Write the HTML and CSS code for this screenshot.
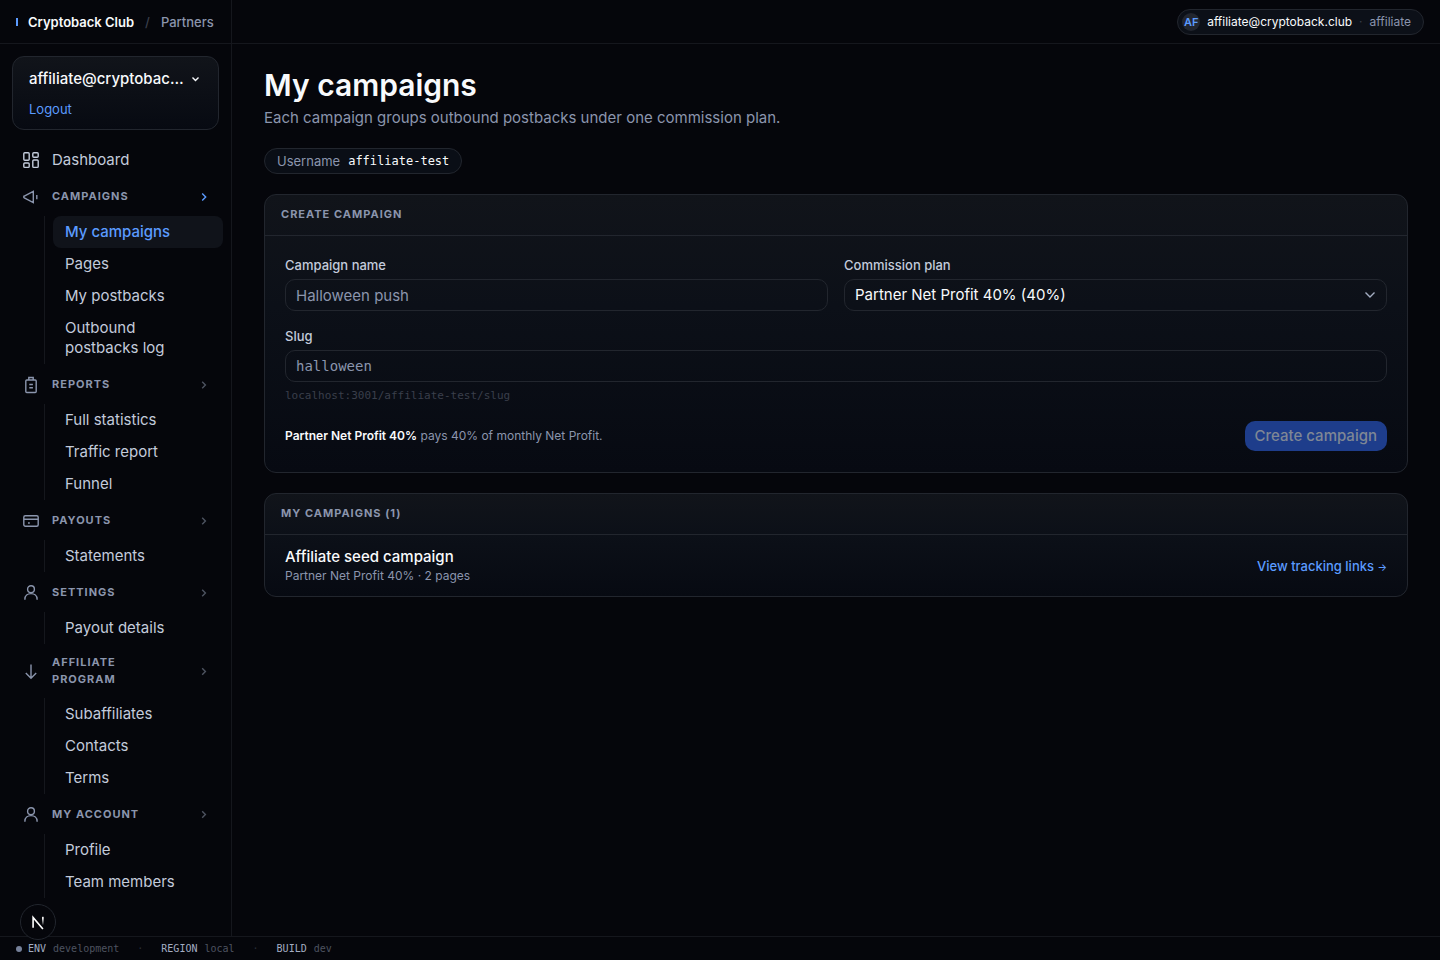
FILE: index.html
```html
<!DOCTYPE html>
<html lang="en">
<head>
    <meta charset="UTF-8">
    <meta name="viewport" content="width=device-width, initial-scale=1.0">
    <title>My campaigns - Cryptoback Club</title>
    <link rel="stylesheet" href="styles.css">
</head>
<body>
    <div class="app">
        <header class="topbar">
            <div class="brand">
                <span class="brand-mark"></span>
                <span class="brand-name">Cryptoback Club</span>
                <span class="brand-sep">/</span>
                <span class="brand-section">Partners</span>
            </div>
            <div class="topbar-right">
                <div class="user-pill">
                    <span class="avatar">AF</span>
                    <span>affiliate@cryptoback.club</span>
                    <span class="dim">·</span>
                    <span class="muted">affiliate</span>
                </div>
            </div>
        </header>

        <aside class="sidebar">
            <div class="account">
                <button type="button" class="account-btn">
                    <span class="account-name">affiliate@cryptoback.club</span>
                    <svg class="chev" viewBox="0 0 14 14"><path d="M4.5 5.5l3 3 3-3"/></svg>
                </button>
                <a href="#" class="logout">Logout</a>
            </div>

            <nav class="nav">
                <a href="#" class="nav-row nav-top">
                    <svg class="icon" viewBox="0 0 20 20"><rect x="2.8" y="2.8" width="5.4" height="7.4" rx="1"/><rect x="11.8" y="2.8" width="5.4" height="4.4" rx="1"/><rect x="2.8" y="13" width="5.4" height="4.4" rx="1"/><rect x="11.8" y="10" width="5.4" height="7.4" rx="1"/></svg>
                    <span class="nav-label">Dashboard</span>
                </a>

                <div class="group">
                    <button type="button" class="nav-row nav-head open">
                        <svg class="icon" viewBox="0 0 20 20"><path d="M12.3 5.3L3.3 10a1 1 0 0 0 0 1.8l9 4.7zM15.8 9v4.2"/></svg>
                        <span class="nav-label">Campaigns</span>
                        <svg class="chev" viewBox="0 0 14 14"><path d="M5.2 4.5L8.7 8l-3.5 3.5"/></svg>
                    </button>
                    <div class="sub">
                        <a href="#" class="active">My campaigns</a>
                        <a href="#">Pages</a>
                        <a href="#">My postbacks</a>
                        <a href="#">Outbound postbacks log</a>
                    </div>
                </div>

                <div class="group">
                    <button type="button" class="nav-row nav-head">
                        <svg class="icon" viewBox="0 0 20 20"><rect x="4.8" y="6" width="10.4" height="12.5" rx="1"/><path d="M7.8 6V3.5h4.4V6M8.3 10.5h3.6M8.3 13.7h3.6"/></svg>
                        <span class="nav-label">Reports</span>
                        <svg class="chev" viewBox="0 0 14 14"><path d="M5.2 4.8L8.4 8l-3.2 3.2"/></svg>
                    </button>
                    <div class="sub">
                        <a href="#">Full statistics</a>
                        <a href="#">Traffic report</a>
                        <a href="#">Funnel</a>
                    </div>
                </div>

                <div class="group">
                    <button type="button" class="nav-row nav-head">
                        <svg class="icon" viewBox="0 0 20 20"><rect x="2.8" y="5.8" width="14.4" height="10.4" rx="1.5"/><path d="M2.8 9.3h14.4M7 13h1.8"/></svg>
                        <span class="nav-label">Payouts</span>
                        <svg class="chev" viewBox="0 0 14 14"><path d="M5.2 4.8L8.4 8l-3.2 3.2"/></svg>
                    </button>
                    <div class="sub">
                        <a href="#">Statements</a>
                    </div>
                </div>

                <div class="group">
                    <button type="button" class="nav-row nav-head">
                        <svg class="icon" viewBox="0 0 20 20"><circle cx="10" cy="7.2" r="3.4"/><path d="M3.9 17.8v-.6c0-3.4 2.7-5.6 6.1-5.6s6.1 2.2 6.1 5.6v.6"/></svg>
                        <span class="nav-label">Settings</span>
                        <svg class="chev" viewBox="0 0 14 14"><path d="M5.2 4.8L8.4 8l-3.2 3.2"/></svg>
                    </button>
                    <div class="sub">
                        <a href="#">Payout details</a>
                    </div>
                </div>

                <div class="group">
                    <button type="button" class="nav-row nav-head">
                        <svg class="icon" viewBox="0 0 20 20"><path d="M10 3.5v13.5M4.8 12l5.2 5.2 5.2-5.2"/></svg>
                        <span class="nav-label">Affiliate program</span>
                        <svg class="chev" viewBox="0 0 14 14"><path d="M5.2 4.3l3.2 3.2-3.2 3.2"/></svg>
                    </button>
                    <div class="sub">
                        <a href="#">Subaffiliates</a>
                        <a href="#">Contacts</a>
                        <a href="#">Terms</a>
                    </div>
                </div>

                <div class="group">
                    <button type="button" class="nav-row nav-head">
                        <svg class="icon" viewBox="0 0 20 20"><circle cx="10" cy="7.2" r="3.4"/><path d="M3.9 17.8v-.6c0-3.4 2.7-5.6 6.1-5.6s6.1 2.2 6.1 5.6v.6"/></svg>
                        <span class="nav-label">My account</span>
                        <svg class="chev" viewBox="0 0 14 14"><path d="M5.2 4.3l3.2 3.2-3.2 3.2"/></svg>
                    </button>
                    <div class="sub">
                        <a href="#">Profile</a>
                        <a href="#">Team members</a>
                    </div>
                </div>
            </nav>
        </aside>

        <main class="main">
            <h1>My campaigns</h1>
            <p class="lead">Each campaign groups outbound postbacks under one commission plan.</p>

            <div class="username">
                <span class="muted">Username</span>
                <span class="mono username-value">affiliate-test</span>
            </div>

            <section class="card">
                <h2>Create campaign</h2>
                <form class="form">
                    <div class="form-row">
                        <div class="field">
                            <label for="name">Campaign name</label>
                            <input type="text" id="name" placeholder="Halloween push">
                        </div>
                        <div class="field">
                            <label for="plan">Commission plan</label>
                            <div class="select">
                                <select id="plan">
                                    <option>Partner Net Profit 40% (40%)</option>
                                </select>
                                <svg viewBox="0 0 16 16"><path d="M3.5 5.5L8 10l4.5-4.5"/></svg>
                            </div>
                        </div>
                    </div>
                    <div class="field">
                        <label for="slug">Slug</label>
                        <input type="text" id="slug" class="mono" placeholder="halloween">
                        <p class="hint mono">localhost:3001/affiliate-test/slug</p>
                    </div>
                    <div class="form-foot">
                        <p><strong>Partner Net Profit 40%</strong> pays 40% of monthly Net Profit.</p>
                        <button type="submit" class="btn" disabled>Create campaign</button>
                    </div>
                </form>
            </section>

            <section class="card">
                <h2>My campaigns (1)</h2>
                <div class="campaign">
                    <div>
                        <h3>Affiliate seed campaign</h3>
                        <p>Partner Net Profit 40% · 2 pages</p>
                    </div>
                    <a href="#">View tracking links <span class="arrow">→</span></a>
                </div>
            </section>
        </main>

        <footer class="status mono">
            <span class="dot"></span>
            <span class="status-item"><b>ENV</b>development</span>
            <span class="status-sep">·</span>
            <span class="status-item"><b>REGION</b>local</span>
            <span class="status-sep">·</span>
            <span class="status-item"><b>BUILD</b>dev</span>
        </footer>
    </div>

    <button type="button" class="devtools" aria-label="Dev tools">
        <svg viewBox="0 0 36 36">
            <defs>
                <linearGradient id="fade" x1="0" y1="0" x2="0" y2="1">
                    <stop offset="0.2" stop-color="#fff"/>
                    <stop offset="1" stop-color="#fff" stop-opacity="0.1"/>
                </linearGradient>
            </defs>
            <path d="M12.8 24V13.2L23.2 25.4" stroke="#fff"/>
            <rect x="22.3" y="12.5" width="1.7" height="8.5" fill="url(#fade)"/>
        </svg>
    </button>
</body>
</html>
```
FILE: styles.css
```css
* {
    box-sizing: border-box;
}
body {
    margin: 0;
    background-color: #05060b;
    color: #f8fafc;
    font-family: Inter, "Liberation Sans", sans-serif;
    font-size: 15px;
    line-height: 20px;
}
h1, h2, h3, p {
    margin: 0;
}
a {
    color: #5b9bff;
    text-decoration: none;
}
button, input, select {
    font: inherit;
    color: inherit;
}
button {
    background: none;
    border: none;
    padding: 0;
    text-align: left;
    cursor: pointer;
}
svg {
    fill: none;
    stroke: currentColor;
    stroke-width: 1.4;
    flex-shrink: 0;
}
.mono {
    font-family: "DejaVu Sans Mono", "Liberation Mono", monospace;
}
.muted {
    color: #8b95ad;
}
.dim {
    color: #3a3f4b;
}
.app {
    display: grid;
    grid-template-columns: 232px 1fr;
    grid-template-rows: 44px 1fr 24px;
    min-height: 100vh;
}

/* Top bar */
.topbar {
    grid-column: 1 / -1;
    display: flex;
    border-bottom: 1px solid #15171d;
}
.brand {
    display: flex;
    align-items: center;
    width: 232px;
    padding-left: 16px;
    border-right: 1px solid #15171d;
    font-size: 13px;
    font-weight: 500;
    white-space: nowrap;
}
.brand-mark {
    width: 2px;
    height: 8px;
    margin-right: 10px;
    background-color: #5b9bff;
}
.brand-name {
    font-weight: 600;
}
.brand-sep {
    margin: 0 11px;
    color: #3a3f4b;
}
.brand-section {
    color: #8b95ad;
}
.topbar-right {
    flex: 1;
    display: flex;
    align-items: center;
    justify-content: flex-end;
    padding-right: 16px;
}
.user-pill {
    display: flex;
    align-items: center;
    gap: 7px;
    height: 26px;
    padding: 0 12px 0 4px;
    border: 1px solid #22262e;
    border-radius: 13px;
    background-color: #0c1018;
    font-size: 12px;
}
.avatar {
    width: 18px;
    height: 18px;
    border-radius: 50%;
    background-color: #22262f;
    color: #5b9bff;
    font-size: 11px;
    font-weight: 600;
    line-height: 18px;
    text-align: center;
}

/* Sidebar */
.sidebar {
    border-right: 1px solid #15171d;
}
.account {
    margin: 12px 12px 0;
    height: 74px;
    padding: 12px 16px;
    border: 1px solid #22262e;
    border-radius: 12px;
    background-image: linear-gradient(#11141a, #070a12);
}
.account-btn {
    display: flex;
    align-items: center;
    gap: 2px;
    width: 100%;
    font-weight: 500;
}
.account-name {
    flex: 1;
    min-width: 0;
    overflow: hidden;
    text-overflow: ellipsis;
    white-space: nowrap;
}
.chev {
    width: 14px;
    height: 14px;
}
.logout {
    display: block;
    margin-top: 10px;
    font-size: 13px;
}
.nav {
    padding: 12px 8px;
}
.nav-row {
    display: flex;
    align-items: center;
    gap: 10px;
    width: 100%;
    min-height: 36px;
    padding: 8px 12px;
}
.nav-top {
    color: #c3cbdb;
}
.nav-head {
    color: #8b95ad;
    font-size: 11px;
    font-weight: 700;
    line-height: 17px;
    letter-spacing: 1px;
    text-transform: uppercase;
}
.nav-label {
    flex: 1;
}
.nav-head .nav-label {
    padding-right: 40px;
}
.nav-head .chev {
    color: #4d5360;
}
.nav-head.open .chev {
    color: #5b9bff;
}
.icon {
    width: 22px;
    height: 20px;
}
.group + .group {
    margin-top: 2px;
}
.sub {
    margin: 2px 0 0 36px;
    padding-left: 8px;
    border-left: 1px solid #15171d;
}
.sub a {
    display: block;
    padding: 6px 12px;
    border-radius: 8px;
    color: #c3cbdb;
}
.sub a.active {
    background-color: #10131a;
    color: #5b9bff;
    font-weight: 500;
}

/* Main */
.main {
    padding: 24px 32px;
}
h1 {
    font-size: 30px;
    font-weight: 600;
    line-height: 34px;
}
.lead {
    margin-top: 6px;
    color: #8b95ad;
}
.username {
    display: inline-flex;
    align-items: center;
    gap: 8px;
    height: 26px;
    margin-top: 20px;
    padding: 0 12px;
    border: 1px solid #22262e;
    border-radius: 13px;
    background-color: #0a0e16;
    font-size: 13px;
}
.username-value {
    font-size: 12px;
}
.card {
    margin-top: 20px;
    border: 1px solid #22262e;
    border-radius: 12px;
    background-image: linear-gradient(#11141a, #0c1018 40%, #070a12);
}
h2 {
    padding: 9px 16px 11px;
    border-bottom: 1px solid #22262e;
    color: #8b95ad;
    font-size: 11px;
    font-weight: 700;
    line-height: 20px;
    letter-spacing: 1px;
    text-transform: uppercase;
}
.form {
    display: flex;
    flex-direction: column;
    gap: 16px;
    padding: 20px 20px 21px;
}
.form-row {
    display: grid;
    grid-template-columns: 1fr 1fr;
    gap: 16px;
}
.field {
    display: flex;
    flex-direction: column;
    gap: 5px;
}
label {
    color: #c3cbdb;
    font-size: 13px;
    font-weight: 500;
    line-height: 18px;
}
input, select {
    width: 100%;
    height: 32px;
    padding: 0 10px;
    border: 1px solid #22262e;
    border-radius: 10px;
    background-color: transparent;
    appearance: none;
}
input.mono {
    font-family: "DejaVu Sans Mono", "Liberation Mono", monospace;
    font-size: 14px;
}
input::placeholder {
    color: #8b95ad;
    opacity: 1;
}
select option {
    background-color: #0c1018;
}
.select {
    position: relative;
}
.select svg {
    position: absolute;
    top: 8px;
    right: 9px;
    width: 16px;
    height: 16px;
    color: #a3adc2;
    pointer-events: none;
}
.hint {
    color: #3a3f4b;
    font-size: 11px;
    line-height: 18px;
}
.form-foot {
    display: flex;
    align-items: center;
    justify-content: space-between;
    color: #8b95ad;
    font-size: 12px;
}
.form-foot strong {
    color: #f8fafc;
    font-weight: 600;
}
.btn {
    height: 30px;
    padding: 0 10px;
    border-radius: 10px;
    background-color: #1e3d8b;
    color: #7f8795;
    font-size: 15px;
    font-weight: 500;
}
.campaign {
    display: flex;
    align-items: center;
    justify-content: space-between;
    padding: 12px 20px 11px;
}
h3 {
    font-size: 15px;
    font-weight: 500;
}
.campaign p {
    color: #8b95ad;
    font-size: 12px;
    line-height: 18px;
}
.campaign a {
    font-size: 13px;
    font-weight: 500;
}
.arrow {
    font-size: 10px;
}

/* Status bar */
.status {
    grid-column: 1 / -1;
    display: flex;
    align-items: center;
    padding: 0 16px;
    border-top: 1px solid #15171d;
    color: #4d5360;
    font-size: 10px;
}
.dot {
    width: 6px;
    height: 6px;
    margin-right: 6px;
    border-radius: 50%;
    background-color: #76819a;
}
.status-item b {
    margin-right: 7px;
    color: #a3adc2;
    font-weight: 400;
}
.status-sep {
    margin: 0 18px;
    color: #2a2e38;
}
.devtools {
    position: fixed;
    left: 20px;
    bottom: 20px;
    width: 36px;
    height: 36px;
    border: 1px solid #22262e;
    border-radius: 50%;
    background-color: #05060b;
}
.devtools svg {
    display: block;
    width: 34px;
    height: 34px;
    stroke: none;
    stroke-width: 1.7;
}
```
